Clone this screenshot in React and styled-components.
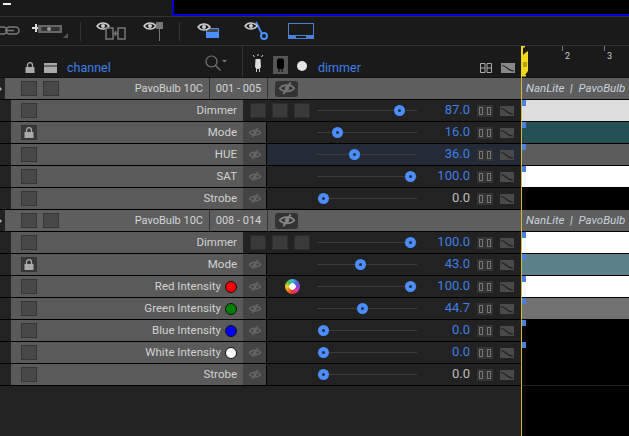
import React from 'react'
import styled, { createGlobalStyle } from 'styled-components'

const Global = createGlobalStyle`
  html, body { margin: 0; padding: 0; background: #222; }
  body { font-family: "Roboto", "Liberation Sans", sans-serif; overflow: hidden; }
`

const Page = styled.div`
  position: relative;
  width: 629px;
  height: 436px;
  overflow: hidden;
  background: #222;
  display: flex;
  flex-direction: column;
`

const TopStrip = styled.div`
  height: 16px;
  flex: none;
  background: #1a1a1a;
  display: flex;
  border-bottom: 1px solid #333;
`

const TopLeft = styled.div`
  width: 172px;
  flex: none;
  padding: 3px 0 0 3px;
  box-sizing: border-box;
`

const Dash = styled.div`
  width: 8px;
  height: 2px;
  background: #eee;
`

const Monitor = styled.div`
  flex: 1;
  height: 16px;
  box-sizing: border-box;
  background: #000;
  border-left: 2px solid #0000d8;
  border-bottom: 2px solid #0000d8;
`

const Toolbar = styled.div`
  height: 28px;
  flex: none;
  background: #1a1a1a;
  border-bottom: 1px solid #333;
  display: flex;
  align-items: center;
`

const ToolSep = styled.div`
  width: 1px;
  height: 19px;
  background: #333;
  margin-left: ${p => p.$left}px;
`

const ToolIcon = styled.svg`
  display: block;
  flex: none;
  margin-left: ${p => p.$left}px;
`

const HeadRow = styled.div`
  height: 32px;
  flex: none;
  background: #1a1a1a;
  border-bottom: 1px solid #111;
  box-sizing: border-box;
  display: flex;
`

const HeadLeft = styled.div`
  width: 243px;
  flex: none;
  border-right: 1px solid #333;
  box-sizing: border-box;
  display: flex;
  align-items: center;
  padding: 12px 0 0 25px;
`

const HeadMid = styled.div`
  width: 278px;
  flex: none;
  display: flex;
  align-items: center;
  padding: 12px 0 0 9px;
  box-sizing: border-box;
`

const HeadLabel = styled.span`
  color: #3f7fe6;
  font-size: 12.5px;
  margin-left: ${p => p.$left}px;
`

const HeadIcon = styled.svg`
  display: block;
  flex: none;
  margin-left: ${p => p.$left || 0}px;
  margin-top: ${p => p.$top || 0}px;
`

const TubeBox = styled.div`
  width: 15px;
  height: 18px;
  margin: -5px 0 0 9px;
  background: #555;
  display: flex;
  align-items: center;
  justify-content: center;
  flex: none;
`

const WhiteDot = styled.div`
  width: 10px;
  height: 10px;
  border-radius: 50%;
  background: #e4e4e4;
  margin: -3px 0 0 9px;
  flex: none;
`

const Ruler = styled.div`
  flex: 1;
  position: relative;
`

const Tick = styled.div`
  position: absolute;
  top: 0;
  left: ${p => p.$left}px;
  width: 1px;
  height: 5px;
  background: #777;
`

const TickNum = styled.span`
  position: absolute;
  top: 5px;
  left: ${p => p.$left}px;
  font-size: 9px;
  line-height: 11px;
  color: #ccc;
`

const PlayLine = styled.div`
  position: absolute;
  left: 521px;
  top: 46px;
  bottom: 0;
  width: 1px;
  background: #d9b73a;
`

const PlayHead = styled.svg`
  position: absolute;
  left: 521px;
  top: 46px;
  display: block;
`

const Row = styled.div`
  height: 22px;
  flex: none;
  box-sizing: border-box;
  border-bottom: 1px solid #000;
  display: flex;
  background: #222;
`

const GroupMain = styled.div`
  width: 516px;
  margin-left: 5px;
  flex: none;
  background: #5e5e5e;
  display: flex;
  align-items: center;
  color: #d4d4d4;
  font-size: 11px;
`

const Arrow = styled.div`
  position: absolute;
  left: 0;
  margin-top: 9px;
  border-left: 2px solid #aaa;
  border-top: 2px solid transparent;
  border-bottom: 2px solid transparent;
`

const Check = styled.div`
  width: 16px;
  height: 15px;
  box-sizing: border-box;
  border: 1px solid #363636;
  background: ${p => (p.$locked ? '#383838' : '#484848')};
  flex: none;
  margin-left: ${p => p.$left || 0}px;
  display: flex;
  align-items: center;
  justify-content: center;
`

const GroupName = styled.div`
  width: 144px;
  margin-right: 6px;
  flex: none;
  text-align: right;
`

const GroupRange = styled.div`
  width: 59px;
  height: 100%;
  flex: none;
  box-sizing: border-box;
  border-left: 1px solid #333;
  border-right: 1px solid #333;
  text-align: center;
  line-height: 21px;
`

const EyeButton = styled.div`
  width: 23px;
  height: 16px;
  margin-left: 7px;
  background: #333;
  border-radius: 3px;
  display: flex;
  align-items: center;
  justify-content: center;
`

const TimeLabel = styled.div`
  flex: 1;
  min-width: 0;
  background: #5e5e5e;
  color: #c8d2dc;
  font-size: 11.5px;
  font-style: italic;
  white-space: nowrap;
  overflow: hidden;
  line-height: 21px;
  padding-left: 5px;
`

const Panel = styled.div`
  width: 232px;
  margin-left: 11px;
  flex: none;
  background: #5a5a5a;
  display: flex;
  align-items: center;
  padding: 0 6px 0 10px;
  box-sizing: border-box;
  color: #d2d2d2;
  font-size: 11.5px;
`

const RowLabel = styled.div`
  flex: 1;
  text-align: right;
  white-space: nowrap;
  padding-bottom: 2px;
`

const Swatch = styled.div`
  width: 12px;
  height: 12px;
  box-sizing: border-box;
  border-radius: 50%;
  border: 1px solid #111;
  background: ${p => p.$color};
  flex: none;
  margin-left: 4px;
`

const RowBody = styled.div`
  width: 278px;
  flex: none;
  display: flex;
`

const EyeCell = styled.div`
  width: 24px;
  flex: none;
  box-sizing: border-box;
  background: #444;
  border-right: 1px solid #000;
  display: flex;
  align-items: center;
  justify-content: center;
`

const Slot = styled.div`
  width: 50px;
  flex: none;
  display: flex;
  align-items: center;
  justify-content: center;
`

const Wheel = styled.div`
  width: 15px;
  height: 15px;
  border-radius: 50%;
  background: radial-gradient(circle, #fff 0 3px, transparent 3.5px),
    conic-gradient(#3fb4e8, #3f6fe0, #8a3fd0, #e03a9a, #e83030, #f08020, #f0d020, #50c040, #3fb4e8);
`

const DimmerBtns = styled.div`
  width: 74px;
  flex: none;
  display: flex;
  align-items: center;
  gap: 6px;
  padding-left: 7px;
  box-sizing: border-box;
`

const DimBtn = styled.div`
  width: 16px;
  height: 15px;
  box-sizing: border-box;
  background: #3a3a3a;
  border: 1px solid #2c2c2c;
`

const Mid = styled.div`
  flex: 1;
  min-width: 0;
  display: flex;
  align-items: center;
  background: ${p => (p.$hot ? '#242a36' : 'transparent')};
`

const Slider = styled.div`
  position: relative;
  width: 100px;
  height: 1px;
  background: #3c3c3c;
  flex: none;
`

const Thumb = styled.div`
  position: absolute;
  top: -5px;
  width: 11px;
  height: 11px;
  margin-left: -5.5px;
  border-radius: 50%;
  box-sizing: border-box;
  border: 4px solid #4c8dff;
  background: #1e2c48;
`

const Value = styled.div`
  width: 53px;
  flex: none;
  text-align: right;
  font-size: 13px;
  padding-bottom: 2px;
  color: ${p => (p.$zero ? '#bdbdbd' : '#3f7fe6')};
`

const Pair = styled.div`
  width: 16px;
  height: 12px;
  flex: none;
  margin-left: 7px;
  background: #333;
  display: flex;
  align-items: center;
  justify-content: center;
  gap: 4px;
`

const PairBit = styled.div`
  width: 4px;
  height: 8px;
  box-sizing: border-box;
  border: 1px solid #777;
`

const CurveIcon = styled.svg`
  display: block;
  flex: none;
  margin-left: ${p => p.$left}px;
`

const Lane = styled.div`
  flex: 1;
  position: relative;
  margin-left: 1px;
  background: ${p => p.$color};
`

const Marker = styled.div`
  position: absolute;
  left: 0;
  top: 0;
  width: 4px;
  height: 6px;
  background: #4a80e0;
`

const Rest = styled.div`
  flex: 1;
  display: flex;
`

const RestLeft = styled.div`
  width: 521px;
  flex: none;
  background: #222;
`

const RestRight = styled.div`
  flex: 1;
  background: #000;
  margin-top: -1px;
  border-top: 1px solid #222;
`

const Eye = ({ color = '#666', size = 14 }) => (
  <svg width={size} height={size * 0.8} viewBox="0 0 15 12" fill="none">
    <path d="M1.5 6C4 2.6 11 2.6 13.5 6 11 9.4 4 9.4 1.5 6Z" stroke={color} strokeWidth="1.5" />
    <circle cx="7.5" cy="6" r="1.8" fill={color} />
    <path d="M10.5 1 4.5 11" stroke={color} strokeWidth="1.5" />
  </svg>
)

const Lock = () => (
  <svg width="10" height="11" viewBox="0 0 10 11" fill="none">
    <path d="M2.5 5V3.2a2.5 2.5 0 0 1 5 0V5" stroke="#aaa" strokeWidth="1.3" />
    <rect x="0.5" y="5" width="9" height="6" fill="#aaa" />
  </svg>
)

const Curve = ({ left, bg = '#4a4a4a', line = '#1c1c1c' }) => (
  <CurveIcon $left={left} width="14" height="10" viewBox="0 0 14 10">
    <rect width="14" height="10" fill={bg} />
    <path d="M1 2.5C6 2.5 6 8 13 8" stroke={line} strokeWidth="1.2" fill="none" />
  </CurveIcon>
)

const channelsA = [
  { name: 'Dimmer', value: 87, text: '87.0', lane: '#dedede', dimmer: true },
  { name: 'Mode', value: 16, text: '16.0', lane: '#245056', locked: true },
  { name: 'HUE', value: 36, text: '36.0', lane: '#5c5c5c', hot: true },
  { name: 'SAT', value: 100, text: '100.0', lane: '#fff' },
  { name: 'Strobe', value: 0, text: '0.0', lane: '#000', zero: true },
]

const channelsB = [
  { name: 'Dimmer', value: 100, text: '100.0', lane: '#fff', dimmer: true },
  { name: 'Mode', value: 43, text: '43.0', lane: '#5a8288', locked: true },
  { name: 'Red Intensity', swatch: '#f00', value: 100, text: '100.0', lane: '#fff', wheel: true },
  { name: 'Green Intensity', swatch: '#008000', value: 44.7, text: '44.7', lane: '#727272' },
  { name: 'Blue Intensity', swatch: '#00f', value: 0, text: '0.0', lane: '#000' },
  { name: 'White Intensity', swatch: '#fff', value: 0, text: '0.0', lane: '#000' },
  { name: 'Strobe', value: 0, text: '0.0', lane: '#000', zero: true },
]

function Channel({ ch }) {
  return (
    <Row>
      <Panel>
        <Check $locked={ch.locked}>{ch.locked && <Lock />}</Check>
        <RowLabel>{ch.name}</RowLabel>
        {ch.swatch && <Swatch $color={ch.swatch} />}
      </Panel>
      <RowBody>
        {ch.dimmer ? (
          <DimmerBtns>
            <DimBtn />
            <DimBtn />
            <DimBtn />
          </DimmerBtns>
        ) : (
          <EyeCell>
            <Eye />
          </EyeCell>
        )}
        <Mid $hot={ch.hot}>
          {!ch.dimmer && <Slot>{ch.wheel && <Wheel />}</Slot>}
          <Slider>
            <Thumb style={{ left: 6 + ch.value * 0.875 }} />
          </Slider>
          <Value $zero={ch.zero}>{ch.text}</Value>
          <Pair>
            <PairBit />
            <PairBit />
          </Pair>
          <Curve left={7} />
        </Mid>
      </RowBody>
      <Lane $color={ch.lane}>{!ch.zero && <Marker />}</Lane>
    </Row>
  )
}

function Group({ range, eyeColor, channels }) {
  return (
    <>
      <Row>
        <Arrow />
        <GroupMain>
          <Check $left={16} />
          <Check $left={6} />
          <GroupName>PavoBulb 10C</GroupName>
          <GroupRange>{range}</GroupRange>
          <EyeButton>
            <Eye color={eyeColor} size={18} />
          </EyeButton>
        </GroupMain>
        <TimeLabel>NanLite&nbsp; | &nbsp;PavoBulb 10C</TimeLabel>
      </Row>
      {channels.map(ch => (
        <Channel key={ch.name} ch={ch} />
      ))}
    </>
  )
}

export default function App() {
  return (
    <Page>
      <Global />
      <TopStrip>
        <TopLeft>
          <Dash />
        </TopLeft>
        <Monitor />
      </TopStrip>
      <Toolbar>
        <ToolIcon $left={0} width="20" height="10" viewBox="0 0 20 10" fill="none" stroke="#777" strokeWidth="1.5">
          <rect x="-6" y="1" width="13" height="7" rx="3.5" />
          <rect x="6" y="1" width="13" height="7" rx="3.5" />
          <path d="M5 4.5h9" />
        </ToolIcon>
        <ToolIcon $left={12} width="36" height="14" viewBox="0 0 36 14">
          <path d="M0 4h8M4 0v8" stroke="#ddd" strokeWidth="2" />
          <rect x="6" y="1" width="24" height="8" fill="#666" />
          <rect x="9" y="3" width="19" height="4" rx="2" fill="#333" />
          <circle cx="17" cy="5" r="2" fill="#999" />
          <path d="M36 14H31L36 9Z" fill="#555" />
        </ToolIcon>
        <ToolSep $left={12} />
        <ToolIcon $left={15} width="30" height="20" viewBox="0 0 30 20" fill="none">
          <path d="M1 5C4 1 10 1 13 5 10 9 4 9 1 5Z" stroke="#ccc" strokeWidth="1.4" />
          <circle cx="7" cy="5" r="2" fill="#ccc" />
          <path d="M10 7h7v11h-7zM22 7h7v11h-7zM17 12.500h5M19.500 10v5" stroke="#777" strokeWidth="1.5" />
        </ToolIcon>
        <ToolIcon $left={17} width="20" height="20" viewBox="0 0 20 20" fill="none">
          <path d="M1 5C4 1 10 1 13 5 10 9 4 9 1 5Z" stroke="#ccc" strokeWidth="1.4" />
          <circle cx="7" cy="5" r="2" fill="#ccc" />
          <rect x="13" y="1" width="7" height="7" fill="#777" />
          <path d="M16.500 8v12" stroke="#777" strokeWidth="1" />
        </ToolIcon>
        <ToolSep $left={16} />
        <ToolIcon $left={17} width="22" height="16" viewBox="0 0 22 16" fill="none">
          <rect x="9" y="5" width="13" height="10" fill="#4c8dff" />
          <rect x="10" y="6" width="11" height="3" fill="#444" />
          <path d="M1 4C4 0 10 0 13 4 10 8 4 8 1 4Z" stroke="#ccc" fill="#1a1a1a" strokeWidth="1.4" />
          <circle cx="7" cy="4" r="2" fill="#ccc" />
        </ToolIcon>
        <ToolIcon $left={25} width="24" height="20" viewBox="0 0 24 20" fill="none">
          <path d="M12 1l6 12" stroke="#4c8dff" strokeWidth="1.8" />
          <circle cx="20" cy="15" r="3" stroke="#4c8dff" strokeWidth="2" />
          <path d="M1 5C4 1 10 1 13 5 10 9 4 9 1 5Z" stroke="#ccc" fill="#1a1a1a" strokeWidth="1.4" />
          <circle cx="7" cy="5" r="2" fill="#ccc" />
        </ToolIcon>
        <ToolIcon $left={20} width="26" height="16" viewBox="0 0 26 16" fill="none">
          <rect x="0.500" y="0.500" width="25" height="15" stroke="#4a80d8" />
          <rect x="0" y="12" width="26" height="4" fill="#4a80d8" />
          <rect x="8" y="13" width="10" height="2" fill="#1a1a1a" />
        </ToolIcon>
      </Toolbar>
      <HeadRow>
        <HeadLeft>
          <Lock />
          <HeadIcon $left={9} width="13" height="10" viewBox="0 0 13 10">
            <rect width="13" height="10" fill="#aaa" />
            <rect y="2" width="13" height="2" fill="#666" />
          </HeadIcon>
          <HeadLabel $left={10}>channel</HeadLabel>
          <HeadIcon $left={94} $top={-10} width="22" height="16" viewBox="0 0 22 16" fill="none">
            <circle cx="6.500" cy="6.500" r="5.500" stroke="#777" strokeWidth="1.2" />
            <path d="M10.500 10.500l5 5" stroke="#777" strokeWidth="1.2" />
            <path d="M17 5h5l-2.500 2.500Z" fill="#777" />
          </HeadIcon>
        </HeadLeft>
        <HeadMid>
          <HeadIcon $top={-8} width="12" height="19" viewBox="0 0 12 19" fill="none">
            <path d="M6 0v2M1 1l1.500 2M11 1L9.500 3" stroke="#ccc" />
            <path d="M3.500 5h5l.5 8-1.500 2h-3L3 13Z" fill="#ddd" />
            <path d="M4.500 15v3M7.500 15v3" stroke="#ccc" />
          </HeadIcon>
          <TubeBox>
            <svg width="9" height="16" viewBox="0 0 9 16">
              <path d="M2 1.500h5l1 2v7l-1.500 1.500h-4L1 10.500v-7Z" fill="#000" />
              <path d="M3 12v3M6 12v3" stroke="#000" />
            </svg>
          </TubeBox>
          <WhiteDot />
          <HeadLabel $left={11}>dimmer</HeadLabel>
          <HeadIcon $left={119} width="12" height="10" viewBox="0 0 12 10" fill="none" stroke="#aaa">
            <path d="M.5.500h4.500v9H.5zM7 .500h4.500v9H7zM0 5h5M7 5h5" />
          </HeadIcon>
          <Curve left={9} bg="#888" line="#222" />
        </HeadMid>
        <Ruler>
          <Tick $left={41} />
          <TickNum $left={44}>2</TickNum>
          <Tick $left={83} />
          <TickNum $left={86}>3</TickNum>
        </Ruler>
      </HeadRow>
      <Group range="001 - 005" eyeColor="#777" channels={channelsA} />
      <Group range="008 - 014" eyeColor="#888" channels={channelsB} />
      <Rest>
        <RestLeft />
        <RestRight />
      </Rest>
      <PlayLine />
      <PlayHead width="8" height="31" viewBox="0 0 8 31">
        <path d="M0 0h4v1.500H2v7.500l2-2 3-2v20l-3 4h1v1.500H0Z" fill="#f2d81e" />
        <path d="M3 16v5M5 16v5" stroke="#7a6a10" strokeWidth="1" />
      </PlayHead>
    </Page>
  )
}
